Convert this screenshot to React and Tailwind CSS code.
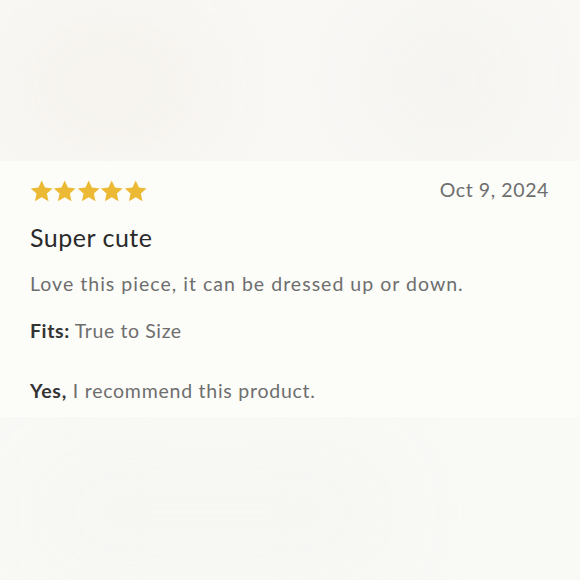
import React from "react";

function Star() {
  return (
    <svg width="23.4" height="22" viewBox="0 0 24 23" className="block">
      <path
        d="M12 0.6l3.4 7.3 8 0.9-6 5.4 1.7 7.9L12 18l-7.1 4.1 1.7-7.9-6-5.4 8-0.9z"
        fill="#ebb934"
      />
    </svg>
  );
}

export default function App() {
  return (
    <div
      className="w-[580px] h-[580px] flex flex-col bg-[#fbfbf8] overflow-hidden"
      style={{ fontFamily: "Lato, 'Noto Sans', sans-serif" }}
    >
      <div className="relative h-[161px] bg-[#f9f8f5] overflow-hidden">
        <div className="absolute left-[10px] top-[10px] w-[200px] h-[150px] rounded-[80px] bg-[#f6f3ee] blur-2xl" />
        <div className="absolute left-[370px] top-[10px] w-[150px] h-[140px] rounded-full bg-[#f5f4f1] blur-2xl" />
      </div>
      <div className="bg-[#fcfcf9] px-[30px] pt-[19px] pb-[16px]">
        <div className="flex items-start justify-between h-[22px]">
          <div className="flex">
            <Star />
            <Star />
            <Star />
            <Star />
            <Star />
          </div>
          <div className="text-[19.5px] tracking-[0.6px] text-[#6e6e6e] leading-none mr-[1px]">
            Oct 9, 2024
          </div>
        </div>
        <div className="mt-[22.5px] text-[25px] tracking-[0.5px] text-[#2a2a2a] leading-none">
          Super cute
        </div>
        <div className="mt-[24px] text-[19.5px] tracking-[1.02px] text-[#6e6e6e] leading-none">
          Love this piece, it can be dressed up or down.
        </div>
        <div className="mt-[27.5px] text-[19.5px] tracking-[0.6px] leading-none">
          <span className="font-bold text-[#333333]">Fits:</span>{" "}
          <span className="text-[#6e6e6e]">True to Size</span>
        </div>
        <div className="mt-[41px] text-[19.5px] tracking-[0.75px] leading-none">
          <span className="font-bold text-[#333333]">Yes,</span>{" "}
          <span className="text-[#6e6e6e]">I recommend this product.</span>
        </div>
      </div>
      <div className="relative flex-1 bg-[#f9f9f6] overflow-hidden">
        <div className="absolute left-[20px] top-[20px] w-[380px] h-[150px] rounded-[60px] bg-[#f6f6f3] blur-2xl" />
      </div>
    </div>
  );
}
